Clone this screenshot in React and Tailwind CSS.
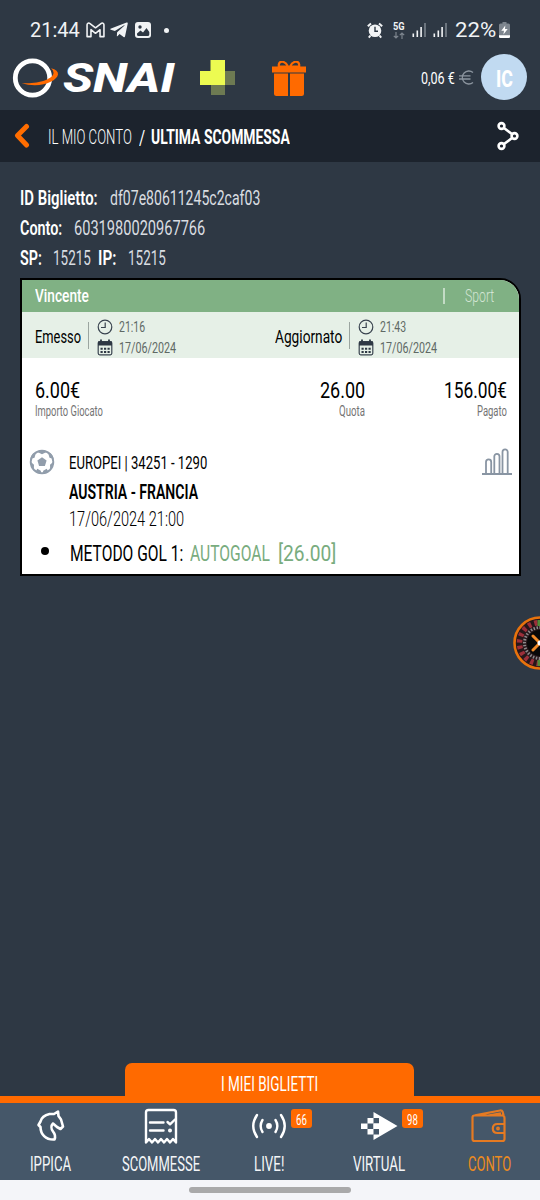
import React, { useLayoutEffect, useRef, useState } from 'react';
import { FaTelegramPlane } from 'react-icons/fa';

// Condensed label: squeezes its text into the given width
function Label({ w, className = '', children }) {
  const ref = useRef(null);
  const [scale, setScale] = useState(1);

  useLayoutEffect(() => {
    setScale(w / ref.current.offsetWidth);
  }, [w, children]);

  return (
    <span className={`block shrink-0 leading-none ${className}`} style={{ width: w }}>
      <span
        ref={ref}
        className="block w-max origin-left whitespace-nowrap"
        style={{ transform: `scaleX(${scale})` }}
      >
        {children}
      </span>
    </span>
  );
}

function SignalIcon() {
  return (
    <svg width="15" height="16" viewBox="0 0 15 16" className="shrink-0">
      <g fill="#f1f3f5">
        <rect x="0.5" y="11.5" width="1.6" height="3.5" />
        <rect x="4.5" y="8.5" width="1.6" height="6.5" />
        <rect x="8.3" y="5" width="1.6" height="10" />
      </g>
      <rect x="12.2" y="1" width="1.6" height="14" fill="#7b838d" />
    </svg>
  );
}

function StatusBar() {
  return (
    <div className="mt-5 flex h-5 items-center pl-[30px] text-[#f1f3f5]">
      <Label w={50} className="text-[20px]">21:44</Label>
      <svg width="19" height="16" viewBox="0 0 18 15" className="ml-[6px]" fill="none" stroke="currentColor" strokeWidth="1.5" strokeLinejoin="round">
        <path d="M1 2.6C1 1 2.6.5 3.8 1.4L9 5.4l5.2-4C15.4.5 17 1 17 2.600V13.800H13.300V7.200L9 10.600 4.700 7.200V13.800H1Z" />
      </svg>
      <FaTelegramPlane size={20} className="ml-[4px]" />
      <svg width="16" height="16" viewBox="0 0 16 16" className="ml-[6px]">
        <rect width="16" height="16" rx="3" fill="currentColor" />
        <circle cx="5" cy="5" r="1.7" fill="#2e3844" />
        <path d="M2 11.5 5.5 8.5 8 10.5 11.5 6 14.3 10V12.5Q14.3 14 12.5 14H3.5Q2 14 2 12.5Z" fill="#2e3844" />
      </svg>
      <span className="ml-[13px] h-[5px] w-[5px] rounded-full bg-[#f1f3f5]" />

      <svg width="16" height="17" viewBox="0 0 16 17" className="ml-[198px]">
        <circle cx="8" cy="8.7" r="6.3" fill="currentColor" />
        <path d="M.8 4.2 4 1.5M15.2 4.2 12 1.5M3.5 13.5 1.8 15.7M12.5 13.5 14.2 15.7" stroke="currentColor" strokeWidth="2" />
        <path d="M8 4.8V9.2H11" fill="none" stroke="#2e3844" strokeWidth="1.4" />
      </svg>
      <div className="ml-[9px] flex w-[13px] flex-col items-center">
        <Label w={12} className="text-[10px] font-bold">5G</Label>
        <svg width="12" height="7" viewBox="0 0 12 7" fill="none" stroke="#7d858e" strokeWidth="1.2">
          <path d="M3 0V6M.8 3.8 3 6 5.2 3.8M9 7V1M6.8 3.2 9 1 11.2 3.2" />
        </svg>
      </div>
      <div className="ml-[7px] flex gap-[6px]">
        <SignalIcon />
        <SignalIcon />
      </div>
      <Label w={41} className="ml-[7px] text-[20px]">22%</Label>
      <svg width="11" height="16" viewBox="0 0 11 16" className="ml-[3px]">
        <path d="M3.5 0H7.5V1.5H9.5Q11 1.5 11 3V14.5Q11 16 9.5 16H1.5Q0 16 0 14.5V3Q0 1.5 1.5 1.5H3.5Z" fill="#7d858e" />
        <path d="M0 13.3H11V14.5Q11 16 9.5 16H1.5Q0 16 0 14.5Z" fill="#fff" />
        <path d="M6.3 3.5 2.3 8.8H5L4.4 12.5 8.7 7H6Z" fill="#fff" />
      </svg>
    </div>
  );
}

function Header() {
  return (
    <div className="mt-3 flex h-[50px] items-center pl-3 text-white">
      <svg width="48" height="42" viewBox="0 0 48 42" className="mt-[2px] shrink-0">
        <circle cx="20.5" cy="21" r="17.2" fill="none" stroke="#fff" strokeWidth="4.8" />
        <path d="M9.5 26C24 27.5 42 22.5 41.5 15.5Q41.4 13 39 11.2 46.5 13 46 17.5C45 24.5 27 32 9.5 26Z" fill="#ff6a00" />
      </svg>
      <Label w={112} className="ml-[3px] mt-[3px] text-[41px] font-extrabold italic">SNAI</Label>
      <svg width="36" height="36" viewBox="0 0 36 36" className="ml-[25px] mt-[1px] shrink-0">
        <path d="M25 11H35V25H25V35H11V25H25Z" fill="#6d7a52" />
        <path d="M10.5 0H25V25H0V11H10.5Z" fill="#ecfb51" />
      </svg>
      <svg width="34" height="36" viewBox="0 0 34 36" className="ml-[36px] mt-[3px] shrink-0" fill="#ff6a00">
        <path d="M16 5.5C13-.5 7.500-.5 6.800 3.500V5.500ZM18 5.500C21-.5 26.500-.5 27.200 3.500V5.500Z" fill="none" stroke="#ff6a00" strokeWidth="2.2" />
        <path d="M0 5.5H34V11.5H0ZM2 12.500H16V35H4.500Q2 35 2 32.500ZM18 12.500H32V32.500Q32 35 29.500 35H18Z" />
      </svg>
      <Label w={34} className="ml-[115px] mt-[3px] text-[17px]">0,06 €</Label>
      <svg width="15" height="15" viewBox="0 0 15 15" className="ml-[4px] shrink-0" fill="none" stroke="#8b949e" strokeWidth="1.3">
        <path d="M14 2.5A6.5 6.5 0 1 0 14 12.5M0 5.800H11.500M0 9H11.500" />
      </svg>
      <div className="ml-[7px] flex h-[46px] w-[46px] shrink-0 items-center justify-center rounded-full bg-[#c1daf1]">
        <Label w={17} className="mt-[4px] text-[23px] font-extrabold">IC</Label>
      </div>
    </div>
  );
}

function Breadcrumb() {
  return (
    <div className="flex h-[52px] items-center bg-[#1c232d] pb-px pl-[14px] text-white">
      <svg width="17" height="26" viewBox="0 0 17 26" fill="none" stroke="#ff6d00" strokeWidth="5" strokeLinecap="round" strokeLinejoin="round">
        <path d="M12.500 3.500 3.500 12.500 12.500 22" />
      </svg>
      <Label w={84} className="ml-[17px] mt-[4px] text-[20.500px] font-light">IL MIO CONTO</Label>
      <Label w={6} className="ml-[7px] mt-[4px] text-[20px]">/</Label>
      <Label w={139} className="ml-[6px] mt-[4px] text-[20.500px] font-bold">ULTIMA SCOMMESSA</Label>
      <svg width="24" height="30" viewBox="0 0 24 30" className="ml-[206px]" fill="none" stroke="#fff" strokeWidth="2.6">
        <circle cx="5.5" cy="5" r="2.9" />
        <circle cx="18.5" cy="15" r="2.9" />
        <circle cx="5.5" cy="25" r="2.9" />
        <path d="M8 7 16 13M8 23 16 17" />
      </svg>
    </div>
  );
}

function TicketInfo() {
  return (
    <div className="flex flex-col pl-5 pt-[22px] text-[19.500px] text-[#d9dde1]">
      <div className="flex h-[30px] items-center">
        <Label w={78} className="font-semibold text-white">ID Biglietto:</Label>
        <Label w={150} className="ml-[12px]">df07e80611245c2caf03</Label>
      </div>
      <div className="flex h-[30px] items-center">
        <Label w={42} className="font-semibold text-white">Conto:</Label>
        <Label w={131} className="ml-[12px]">6031980020967766</Label>
      </div>
      <div className="flex h-[30px] items-center">
        <Label w={22} className="font-semibold text-white">SP:</Label>
        <Label w={38} className="ml-[11px]">15215</Label>
        <Label w={18} className="ml-[7px] font-semibold text-white">IP:</Label>
        <Label w={38} className="ml-[12px]">15215</Label>
      </div>
    </div>
  );
}

function DateBlock({ time, date }) {
  return (
    <div className="flex flex-col text-[14.500px] text-[#5f6965]">
      <div className="flex h-[21px] items-center">
        <svg width="16" height="16" viewBox="0 0 16 16" className="-mt-[3px]" fill="none" stroke="#39434f" strokeWidth="1.2">
          <circle cx="8" cy="8" r="6.8" />
          <path d="M8.2 3.5V8.5H4" />
        </svg>
        <Label w={26} className="ml-[6px]">{time}</Label>
      </div>
      <div className="flex h-[21px] items-center">
        <svg width="16" height="17" viewBox="0 0 16 17" className="-mt-[3px]">
          <rect x="1.2" y="2.6" width="13.6" height="13.2" rx="1.5" fill="none" stroke="#39434f" strokeWidth="1.2" />
          <path d="M1 2.500H15V6.500H1Z" fill="#2e3844" />
          <path d="M4 .5V4M12 .5V4" stroke="#2e3844" strokeWidth="1.8" />
          <path d="M3.5 9.700H12.700M3.500 13H12.700" stroke="#2e3844" strokeWidth="2" strokeDasharray="2.2 1.3" />
        </svg>
        <Label w={57} className="ml-[6px]">{date}</Label>
      </div>
    </div>
  );
}

function FootballIcon() {
  return (
    <svg width="26" height="26" viewBox="0 0 26 26" className="shrink-0">
      <circle cx="13" cy="13" r="11.3" fill="#fff" stroke="#919dab" strokeWidth="1.9" />
      <g fill="#919dab">
        <path d="M13 8.2 17.600 11.600 15.900 17H10.100L8.400 11.600Z" />
        <path d="M7.500 2.500 13 5.300 18.500 2.500Q13-.5 7.500 2.500ZM1.300 10 5.500 8.800 7 3.500 4 4.500Q1.300 7.500 1.300 10ZM1.300 12.500 5 15.800 4.800 20.500Q1.300 17 1.300 12.500ZM24.700 10 20.500 8.800 19 3.500 22 4.500Q24.700 7.500 24.700 10ZM24.700 12.500 21 15.800 21.200 20.500Q24.700 17 24.700 12.500ZM6.500 23 8.300 19.800 11.800 21.700 12.300 24.800Q9 24.800 6.500 23ZM19.500 23 17.700 19.800 14.200 21.700 13.700 24.800Q17 24.800 19.500 23Z" />
      </g>
    </svg>
  );
}

function TicketCard() {
  return (
    <div className="ml-5 mt-[4px] h-[298px] w-[501px] overflow-hidden rounded-tr-[21px] border-2 border-black bg-white text-black">
      <div className="flex h-[32px] items-center bg-[#80b184] pb-[2px] pl-[13px]">
        <Label w={54} className="text-[19px] font-medium text-white">Vincente</Label>
        <span className="ml-[354px] mt-[2px] h-4 w-[1.5px] bg-[#c3dbc5]" />
        <Label w={29} className="ml-[20px] text-[19px] font-light text-[#d3e5d4]">Sport</Label>
      </div>

      <div className="flex h-[46px] items-center bg-[#e6f0e7] pl-[13px]">
        <Label w={46} className="mt-[3px] text-[19px]">Emesso</Label>
        <span className="ml-[7px] h-[27px] w-px bg-[#9ba5a0]" />
        <div className="ml-[8px] mt-[7px]"><DateBlock time="21:16" date="17/06/2024" /></div>
        <Label w={67} className="ml-[99px] mt-[3px] text-[19px]">Aggiornato</Label>
        <span className="ml-[7px] h-[27px] w-px bg-[#9ba5a0]" />
        <div className="ml-[8px] mt-[7px]"><DateBlock time="21:43" date="17/06/2024" /></div>
      </div>

      <div className="flex pl-[13px] pt-[22px]">
        <div className="flex w-[110px] flex-col">
          <Label w={45} className="text-[22px]">6.00€</Label>
          <Label w={68} className="mt-[3px] text-[14.500px] text-[#737373]">Importo Giocato</Label>
        </div>
        <div className="ml-[152px] flex w-[68px] flex-col items-end">
          <Label w={45} className="text-[22px]">26.00</Label>
          <Label w={26} className="mt-[3px] text-[14.500px] text-[#737373]">Quota</Label>
        </div>
        <div className="ml-[32px] flex w-[110px] flex-col items-end">
          <Label w={63} className="text-[22px]">156.00€</Label>
          <Label w={30} className="mt-[3px] text-[14.500px] text-[#737373]">Pagato</Label>
        </div>
      </div>

      <div className="mt-[29px] flex pl-[7px]">
        <FootballIcon />
        <div className="ml-[14px] flex w-[413px] flex-col">
          <div className="flex h-[30px] items-center"><Label w={138} className="text-[18.500px]">EUROPEI | 34251 - 1290</Label></div>
          <div className="flex h-[28px] items-center"><Label w={129} className="text-[19.500px] font-semibold">AUSTRIA - FRANCIA</Label></div>
          <div className="flex h-[27px] items-center"><Label w={115} className="text-[19.500px] font-light">17/06/2024 21:00</Label></div>
        </div>
        <svg width="30" height="28" viewBox="0 0 30 28" fill="none" stroke="#8995a3" strokeWidth="1.8" className="-mt-px shrink-0">
          <path d="M4 26V14A2.600 2.600 0 0 1 9.200 14V26M12.300 26V8.500A2.600 2.600 0 0 1 17.500 8.500V26M20.500 26V4A2.600 2.600 0 0 1 25.700 4V26M0 26H30" />
        </svg>
      </div>

      <div className="flex h-[40px] items-center pl-[19px]">
        <span className="-mt-[5px] h-2 w-2 rounded-full bg-black" />
        <Label w={113} className="ml-[21px] text-[21.500px]">METODO GOL 1:</Label>
        <Label w={80} className="ml-[7px] text-[21.500px] text-[#79ac7e]">AUTOGOAL</Label>
        <Label w={58} className="ml-[8px] text-[21.500px] text-[#79ac7e]">[26.00]</Label>
      </div>
    </div>
  );
}

function RouletteButton() {
  return (
    <svg width="27" height="54" viewBox="0 0 27 54" className="ml-auto mt-[40px]">
      <circle cx="27" cy="27" r="25.5" fill="#26171a" stroke="#e8720c" strokeWidth="2.6" />
      <circle cx="27" cy="27" r="20.5" fill="none" stroke="#9c2f3a" strokeWidth="5.5" strokeDasharray="3.3 3.14" />
      <circle cx="27" cy="27" r="15.5" fill="none" stroke="#8e898c" strokeWidth="3" strokeDasharray="1.5 1.5" />
      <circle cx="27" cy="27" r="13" fill="#080808" />
      <path d="M24.500 4H27V10H24.500ZM24.500 44H27V50H24.500Z" fill="#4f8c3a" />
      <path d="M20 20 27 27 20 34" fill="none" stroke="#f18a28" strokeWidth="3" strokeLinecap="round" />
      <circle cx="27" cy="27" r="2.5" fill="#fff" />
    </svg>
  );
}

const navIcons = {
  horse: (
    <svg width="30" height="34" viewBox="0 0 30 34" fill="none" stroke="#fff" strokeWidth="2.6" strokeLinejoin="round">
      <path d="M18.500 30.500C9.500 31 4.500 25 4.500 18L2.500 16 4.500 12.500C5.500 8.500 9 6 13.500 5L18 5 22 2.500 22.500 7 25 10.500 27 17.500 24.500 20 21 18 17 14.500C15 16.500 15 20 17 22.500 19.500 25.500 19.500 28 18.500 30.500Z" />
    </svg>
  ),
  ticket: (
    <svg width="34" height="37" viewBox="0 0 34 37" fill="none" stroke="#fff" strokeWidth="2.4" strokeLinejoin="round" strokeLinecap="round">
      <path d="M2 34.500V4.500Q2 2 4.500 2H29.500Q32 2 32 4.500V34.500L29 31 26 34.500 23 31 20 34.500 17 31 14 34.500 11 31 8 34.500 5 31Z" />
      <path d="M6 14.500H19.500M6 22.500H19.500M23.500 14 26 16.300 31 11.500" />
      <circle cx="26" cy="22.500" r=".8" fill="#fff" />
    </svg>
  ),
  live: (
    <svg width="36" height="28" viewBox="0 0 36 28" fill="none" stroke="#fff" strokeWidth="2.4" strokeLinecap="round">
      <circle cx="18" cy="14" r="2.9" fill="#fff" stroke="none" />
      <path d="M11.500 8Q7.800 14 11.500 20M6 3Q-1.500 14 6 25M24.500 8Q28.200 14 24.500 20M30 3Q37.500 14 30 25" />
    </svg>
  ),
  virtual: (
    <svg width="37" height="29" viewBox="0 0 37 29" fill="#fff">
      <path d="M12.500 0 36.500 14 12.500 28V22.500H18V17H12.500V11.500H18V6H12.500Z" />
      <path d="M0 11.500H6.500V17H0ZM6.500 6H12.500V11.500H6.500ZM6.500 17H12.500V22.500H6.500ZM12.500 11.500H18V17H12.500Z" />
    </svg>
  ),
  wallet: (
    <svg width="36" height="34" viewBox="0 0 36 34" fill="none" stroke="#e57a22" strokeWidth="2.2" strokeLinejoin="round">
      <path d="M3.500 6.500H31Q33.500 6.500 33.500 9V30Q33.500 32 31.500 32H3.500Q1.500 32 1.500 30V8.500Q1.500 6.500 3.500 6.500ZM4 6.300 29 1.500Q31 1.200 31.700 3L32.700 6.800M17 6.500 30 4.300M33.500 15H26.500Q21.800 15 21.800 19.500 21.800 24 26.500 24H33.500" />
      <circle cx="27" cy="19.500" r=".8" />
    </svg>
  ),
};

const navItems = [
  { name: 'IPPICA', icon: 'horse', w: 41, cell: 'w-[101px]' },
  { name: 'SCOMMESSE', icon: 'ticket', w: 78, cell: 'w-[119px]' },
  { name: 'LIVE!', icon: 'live', w: 30, cell: 'w-[98px]', badge: '66' },
  { name: 'VIRTUAL', icon: 'virtual', w: 52, cell: 'w-[122px]', badge: '98' },
  { name: 'CONTO', icon: 'wallet', w: 43, cell: 'w-[98px]', active: true },
];

function BottomNav() {
  return (
    <div className="mt-auto flex flex-col">
      <div className="ml-[125px] flex h-[33px] w-[289px] items-center justify-center rounded-t-[7px] bg-[#ff6a00] pt-[10px] text-white">
        <Label w={97} className="text-[19.500px]">I MIEI BIGLIETTI</Label>
      </div>
      <div className="h-[7px] bg-[#ff6a00]" />
      <div className="flex h-[77px] bg-[#455769]">
        {navItems.map((item) => (
          <div key={item.name} className={`flex shrink-0 flex-col items-center ${item.cell}`}>
            <div className="relative mt-[4px] flex h-[38px] items-center justify-center">
              {navIcons[item.icon]}
              {item.badge && (
                <span className="absolute left-full top-[2px] ml-[4px] flex h-[19px] w-[21px] items-center justify-center rounded-[3px] bg-[#ff6a00] text-white">
                  <Label w={11} className="mt-[2px] text-[14px]">{item.badge}</Label>
                </span>
              )}
            </div>
            <Label w={item.w} className={`mt-[9px] text-[20px] ${item.active ? 'text-[#ec8b20]' : 'text-[#f4f6f8]'}`}>
              {item.name}
            </Label>
          </div>
        ))}
      </div>
      <div className="flex h-5 items-center justify-center bg-[#f4f5f9]">
        <span className="h-[6px] w-[162px] rounded-full bg-[#a9a9aa]" />
      </div>
    </div>
  );
}

export default function App() {
  return (
    <div className="flex h-[1200px] w-[540px] flex-col overflow-hidden bg-[#2e3844] font-['Roboto','Open_Sans',sans-serif]">
      <div className="flex h-[110px] flex-col">
        <StatusBar />
        <Header />
      </div>
      <Breadcrumb />
      <TicketInfo />
      <TicketCard />
      <RouletteButton />
      <BottomNav />
    </div>
  );
}
